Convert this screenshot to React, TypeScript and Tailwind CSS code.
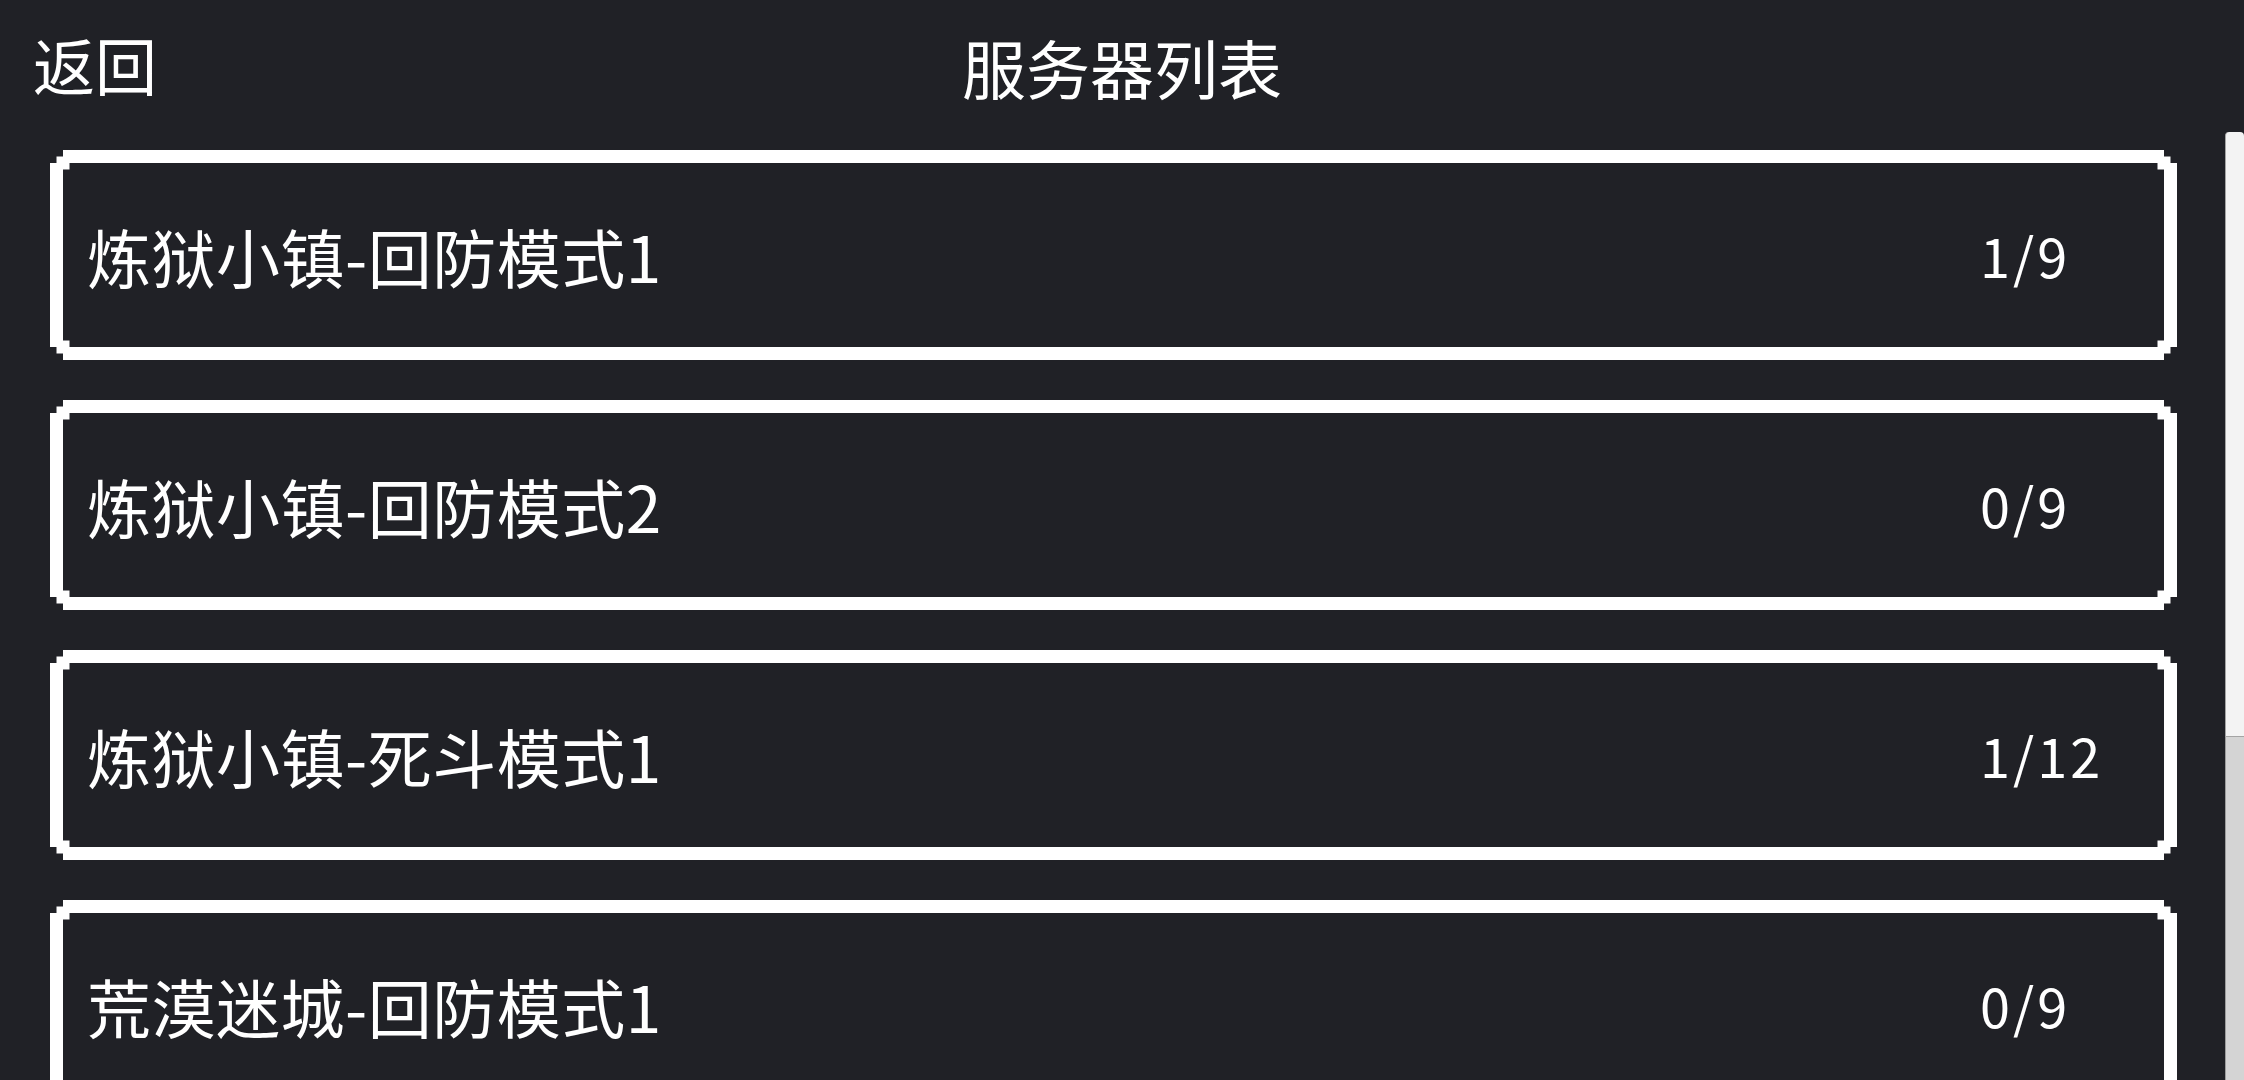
const OUTER_CLIP =
  '[clip-path:polygon(13px_0,calc(100%_-_13px)_0,calc(100%_-_13px)_6.5px,calc(100%_-_6.5px)_6.5px,calc(100%_-_6.5px)_13px,100%_13px,100%_calc(100%_-_13px),calc(100%_-_6.5px)_calc(100%_-_13px),calc(100%_-_6.5px)_calc(100%_-_6.5px),calc(100%_-_13px)_calc(100%_-_6.5px),calc(100%_-_13px)_100%,13px_100%,13px_calc(100%_-_6.5px),6.5px_calc(100%_-_6.5px),6.5px_calc(100%_-_13px),0_calc(100%_-_13px),0_13px,6.5px_13px,6.5px_6.5px,13px_6.5px)]'

const INNER_CLIP =
  '[clip-path:polygon(6.5px_0,calc(100%_-_6.5px)_0,calc(100%_-_6.5px)_6.5px,100%_6.5px,100%_calc(100%_-_6.5px),calc(100%_-_6.5px)_calc(100%_-_6.5px),calc(100%_-_6.5px)_100%,6.5px_100%,6.5px_calc(100%_-_6.5px),0_calc(100%_-_6.5px),0_6.5px,6.5px_6.5px)]'

type Server = {
  id: number
  name: string
  online: number
  max: number
}

const servers: Server[] = [
  { id: 1, name: '炼狱小镇-回防模式1', online: 1, max: 9 },
  { id: 2, name: '炼狱小镇-回防模式2', online: 0, max: 9 },
  { id: 3, name: '炼狱小镇-死斗模式1', online: 1, max: 12 },
  { id: 4, name: '荒漠迷城-回防模式1', online: 0, max: 9 },
  { id: 5, name: '荒漠迷城-回防模式2', online: 0, max: 9 },
  { id: 6, name: '荒漠迷城-死斗模式1', online: 0, max: 12 },
]

function ServerCard({ server }: { server: Server }) {
  return (
    <button className={`block h-[210px] w-full shrink-0 bg-white p-[13px] text-left ${OUTER_CLIP}`}>
      <div className={`flex h-full items-center bg-[#202126] pl-[24px] ${INNER_CLIP}`}>
        <span className="flex-1 text-[64px] leading-none tracking-[0.5px] text-white">{server.name}</span>
        <span className="w-[184px] shrink-0 text-[54px] leading-none tracking-[3px] text-white">
          {server.online}/{server.max}
        </span>
      </div>
    </button>
  )
}

export default function App() {
  return (
    <div className="flex h-[1080px] w-[2244px] flex-col overflow-hidden bg-[#202126] font-['Noto_Sans_CJK_SC',sans-serif] text-white">
      {/* header */}
      <div className="grid h-[132px] shrink-0 grid-cols-[1fr_auto_1fr] items-center">
        <button className="justify-self-start pb-[4px] pl-[33px] text-[62px] leading-none text-white">返回</button>
        <h1 className="text-[64px] font-normal leading-none">服务器列表</h1>
        <div />
      </div>

      {/* server list + scrollbar */}
      <div className="flex h-[948px]">
        <div className="min-w-0 flex-1 overflow-y-auto [scrollbar-width:none]">
          <div className="flex flex-col gap-[40px] pb-[7px] pl-[50px] pr-[48px] pt-[18px]">
            {servers.map((s) => (
              <ServerCard key={s.id} server={s} />
            ))}
          </div>
        </div>
        <div className="flex w-[19px] shrink-0 flex-col">
          <div className="h-[605px] rounded-t-[4px] border-b border-l border-[#a4a4a4] bg-[#f3f3f3]" />
          <div className="flex-1 border-l border-[#9c9c9c] bg-[#d4d4d4]" />
        </div>
      </div>
    </div>
  )
}
